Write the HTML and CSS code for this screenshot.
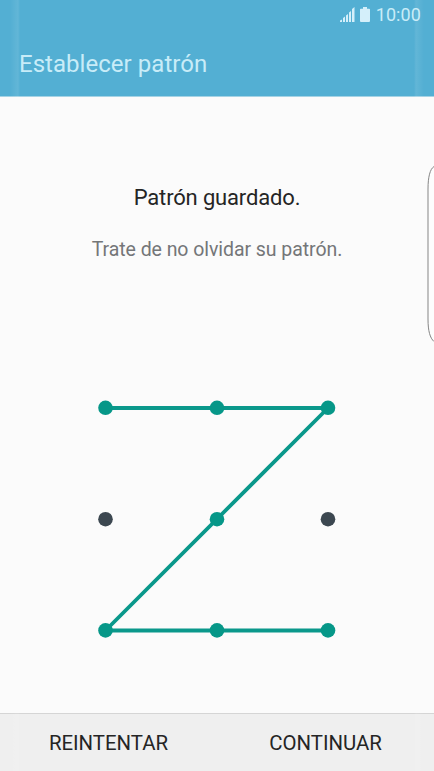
FILE: index.html
```html
<!DOCTYPE html>
<html lang="es">
<head>
<meta charset="utf-8">
<title>Establecer patrón</title>
<link rel="stylesheet" href="styles.css">
</head>
<body>
<div class="screen">
  <header class="header">
    <div class="status">
      <svg class="signal" width="15" height="15" viewBox="0 0 15 15"><path d="M0 15v-1.500l2-1V15zM3 15v-4l2-1.500V15zM6 15V8.500L8 7v8zM9 15V5.500L11 4v11zM12 15V2l2.500-2v15z"/></svg>
      <svg class="battery" width="10" height="15" viewBox="0 0 10 15"><path d="M3 0h4v1.700h2.200q.8 0 .8.800V14q0 1-1 1H1q-1 0-1-1V2.500q0-.8.800-.8H3z"/></svg>
      <span class="clock">10:00</span>
    </div>
    <h1 class="title">Establecer patrón</h1>
  </header>
  <main class="content">
    <p class="saved">Patrón guardado.</p>
    <p class="hint">Trate de no olvidar su patrón.</p>
    <svg class="pattern" width="240" height="240" viewBox="0 0 240 240">
      <path class="trace" d="M8.500 9H231L8.500 231.500H231"/>
      <g class="active">
        <circle cx="8.500" cy="8.800" r="7.300"/><circle cx="120" cy="8.800" r="7.300"/><circle cx="231" cy="8.800" r="7.300"/>
        <circle cx="120" cy="120.200" r="7.300"/>
        <circle cx="8.500" cy="231.400" r="7.300"/><circle cx="120" cy="231.400" r="7.300"/><circle cx="231" cy="231.400" r="7.300"/>
      </g>
      <g class="idle"><circle cx="8.500" cy="120.200" r="7.300"/><circle cx="231" cy="120.200" r="7.300"/></g>
    </svg>
  </main>
  <footer class="footer">
    <button class="action">REINTENTAR</button>
    <button class="action">CONTINUAR</button>
  </footer>
  <svg class="edge-handle" width="7" height="178" viewBox="0 0 7 178"><path d="M7 1.500C3 4 1 12 1 24v130c0 12 2 19 6 22.500"/></svg>
  <div class="edge-glow edge-left"></div>
  <div class="edge-glow edge-right"></div>
</div>
</body>
</html>
```
FILE: styles.css
```css
* { box-sizing: border-box; }
body { margin: 0; font-family: Roboto, sans-serif; }
.screen {
  position: relative;
  display: flex;
  flex-direction: column;
  width: 434px;
  height: 771px;
  overflow: hidden;
  background: #fbfbfb;
}
.header { height: 97px; background: #53afd3; border-bottom: 1px solid #a5d3e5; color: #c8ecf8; }
.status { display: flex; align-items: center; justify-content: flex-end; height: 30px; padding-right: 13px; }
.status svg { fill: #d4effa; }
.signal { position: relative; top: -1px; }
.battery { position: relative; top: -1px; margin: 0 6px 0 5px; }
.clock { font-size: 18px; line-height: 30px; letter-spacing: 0.1px; }
.title { margin: 18px 0 0 19px; font-size: 24px; font-weight: 400; line-height: 32px; letter-spacing: 0.04px; }
.content { flex: 1; display: flex; flex-direction: column; align-items: center; }
.saved { margin: 85px 0 0; font-size: 22px; line-height: 32px; letter-spacing: -0.16px; color: #252525; }
.hint { margin: 21px 0 0; font-size: 19.5px; line-height: 30px; letter-spacing: -0.06px; color: #747678; }
.pattern { margin-top: 134px; }
.trace { fill: none; stroke: #0a988b; stroke-width: 3.800; stroke-linejoin: round; }
.active { fill: #069788; }
.idle { fill: #3c4750; }
.footer { display: flex; height: 58px; background: #efefef; border-top: 1px solid #d5d5d5; }
.action {
  flex: 1;
  padding: 1px 0 0;
  border: 0;
  background: none;
  font: 400 20.4px/56px Roboto, sans-serif;
  color: #252525;
}
.edge-handle { position: absolute; right: 0; top: 165px; fill: #fdfdfd; stroke: #858585; stroke-width: 1; }
.edge-glow { position: absolute; top: 0; bottom: 0; width: 20px; pointer-events: none; }
.edge-left { left: 0; background: linear-gradient(90deg, transparent 50%, rgba(255,255,255,.09) 90%, transparent); }
.edge-right { right: 0; background: linear-gradient(270deg, transparent 50%, rgba(255,255,255,.09) 90%, transparent); }
```
